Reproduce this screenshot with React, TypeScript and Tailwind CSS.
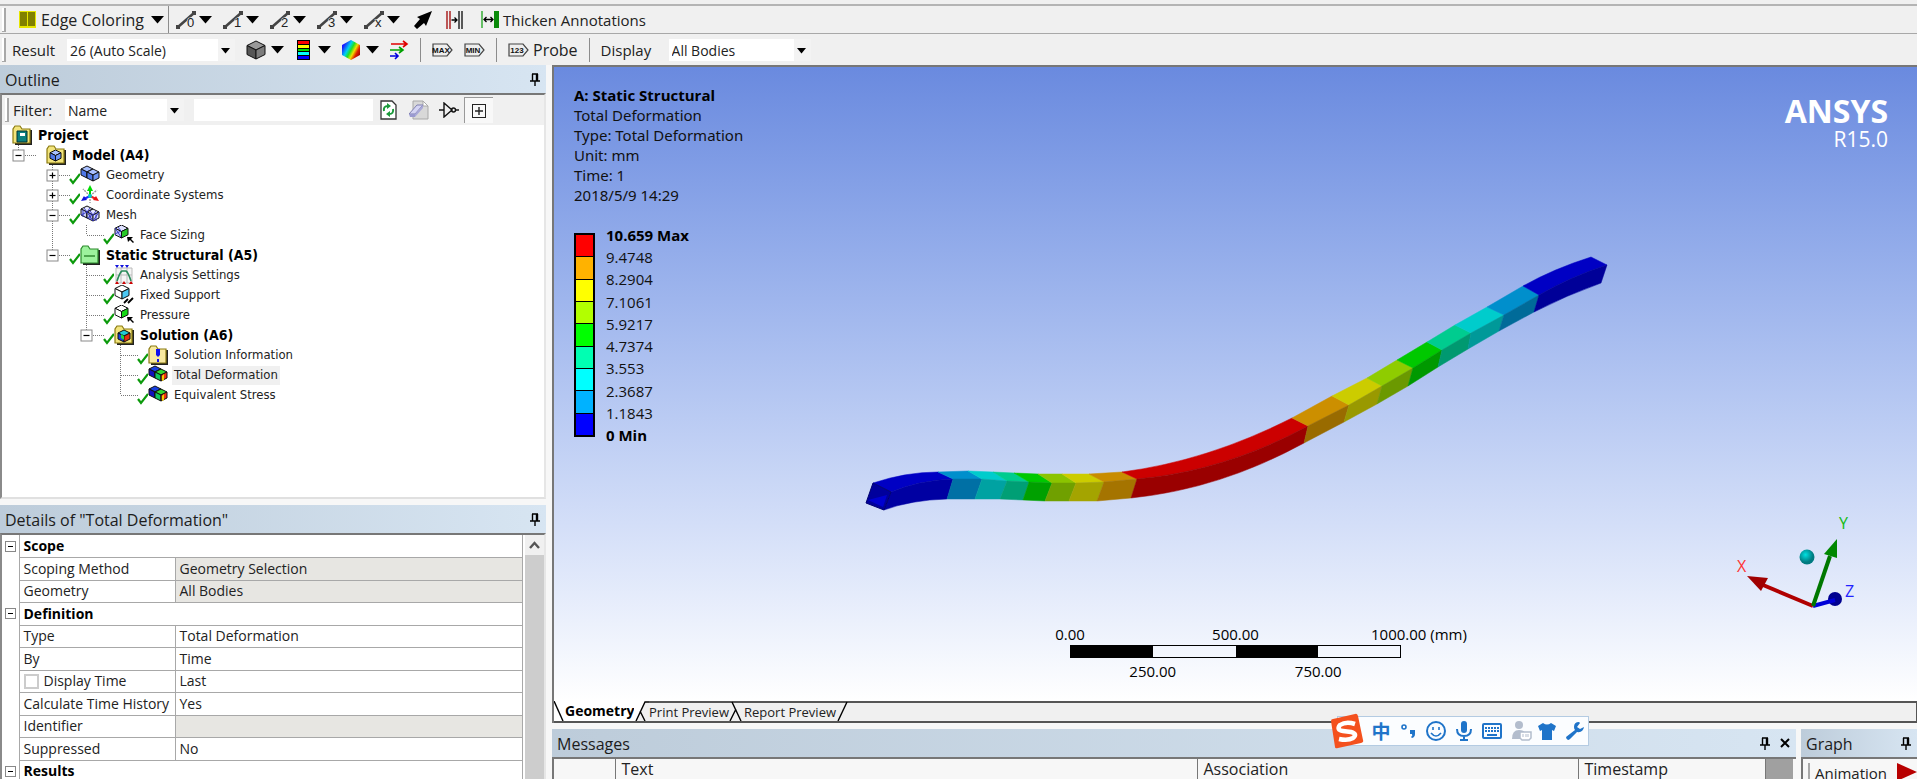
import type { ReactNode } from "react";
import clsx from "clsx";

const UI = "font-['Open_Sans','Noto_Sans',sans-serif]";

/* ---------- small shared pieces ---------- */

function Caret() {
  return (
    <svg width="13" height="8" viewBox="0 0 13 8" className="shrink-0">
      <path d="M0 0H13L6.5 7.5Z" fill="#000" />
    </svg>
  );
}

function Pin() {
  return (
    <svg width="10" height="13" viewBox="0 0 10 13" className="shrink-0">
      <path
        d="M2 1H8M2.5 1V8M0 8H10M5 8V13"
        stroke="#000"
        strokeWidth="1.4"
        fill="none"
      />
      <path d="M7 1V8" stroke="#000" strokeWidth="2.4" />
    </svg>
  );
}

function Grip() {
  return (
    <div className="h-6 w-1 shrink-0 border-r-2 border-b border-[#a8a8a8] bg-white" />
  );
}

function Separator() {
  return <div className="h-6 w-px shrink-0 bg-[#8c8c8c]" />;
}

interface PickerProps {
  id: string;
  value: string;
  className?: string;
}

function Picker({ id, value, className }: PickerProps) {
  return (
    <div className={clsx("flex h-[22px] items-center bg-[#f3f3f3]", className)}>
      <select
        id={id}
        defaultValue={value}
        className="h-full min-w-0 flex-1 appearance-none bg-white pt-[2px] pl-[3px] text-sm leading-5 text-[#222] outline-none"
      >
        <option>{value}</option>
      </select>
      <svg width="17" height="22" viewBox="0 0 17 22" className="shrink-0">
        <path d="M3 9H12L7.5 14.5Z" fill="#000" />
      </svg>
    </div>
  );
}

interface CubeProps {
  x?: number;
  y?: number;
  s?: number;
  top: string;
  left: string;
  right: string;
}

// Isometric cube, s is the full height
function Cube({ x = 0, y = 0, s = 18, top, left, right }: CubeProps) {
  const h = s / 2;
  const q = s / 4;
  const w = s;
  return (
    <g transform={`translate(${x} ${y})`} stroke="#111" strokeWidth="1" strokeLinejoin="round">
      <polygon points={`0,${q} ${w / 2},0 ${w},${q} ${w / 2},${h}`} fill={top} />
      <polygon points={`0,${q} ${w / 2},${h} ${w / 2},${s} 0,${s - q}`} fill={left} />
      <polygon points={`${w},${q} ${w / 2},${h} ${w / 2},${s} ${w},${s - q}`} fill={right} />
    </g>
  );
}

function Folder({ fill = "#f2e47c", edge = "#8a7a10" }: { fill?: string; edge?: string }) {
  return (
    <g>
      <path d="M3 19H19V5" stroke="#222" strokeWidth="2" fill="none" />
      <path d="M1 18V4L3 1H8L10 4H18V18Z" fill={fill} stroke={edge} strokeWidth="1.2" />
    </g>
  );
}

function PanelHeader({ title, closable = false }: { title: string; closable?: boolean }) {
  return (
    <header className="flex h-7 shrink-0 items-center gap-[10px] bg-linear-to-r from-[#bdccda] to-[#d7e5f2] pr-[6px] pl-[5px]">
      <h2 className="flex-1 truncate pt-px text-base leading-6 text-[#1c1c1c]">{title}</h2>
      <button aria-label={`Pin ${title}`}>
        <Pin />
      </button>
      {closable && (
        <button aria-label={`Close ${title}`}>
          <svg width="10" height="10" viewBox="0 0 10 10">
            <path d="M1 1L9 9M9 1L1 9" stroke="#000" strokeWidth="2" />
          </svg>
        </button>
      )}
    </header>
  );
}

/* ---------- toolbars ---------- */

const edgeModes = ["0", "1", "2", "3", "x"];

function EdgeToolbar() {
  return (
    <div className="flex h-[30px] items-center border-t-2 border-b border-t-[#b4b4b4] border-b-[#a8a8a8] pl-[2px]">
      <Grip />
      <button className="ml-2 flex h-full w-[155px] items-center gap-[5px] border-r border-[#8c8c8c] pl-[5px] text-left text-[#222]">
        <svg width="17" height="17" viewBox="0 0 17 17" className="shrink-0">
          <rect width="17" height="17" fill="#e6e600" />
          <rect x="1" y="1" width="7" height="14" fill="#808000" />
          <rect x="9" y="1" width="7" height="14" fill="#808000" />
        </svg>
        <span className="flex-1 text-base leading-5 whitespace-nowrap">Edge Coloring</span>
        <span className="pr-1">
          <Caret />
        </span>
      </button>
      <div className="ml-[7px] flex">
        {edgeModes.map((mode) => (
          <button
            key={mode}
            aria-label={`Edge option ${mode}`}
            className="flex w-[47px] items-center gap-[2px]"
          >
            <svg width="21" height="22" viewBox="0 0 21 22">
              <path d="M2 18L18 4" stroke="#444" strokeWidth="2.6" />
              <path d="M16 2h4v4h-4zM0 16h4v4h-4z" fill="#444" />
              <text
                x="11"
                y="18"
                fontSize="13"
                fill="#222"
                stroke="#f0f0f0"
                strokeWidth="1"
                paintOrder="stroke"
                fontFamily="Liberation Sans"
              >
                {mode}
              </text>
            </svg>
            <Caret />
          </button>
        ))}
      </div>
      <button aria-label="Edge direction" className="ml-[2px]">
        <svg width="20" height="20" viewBox="0 0 20 20">
          <path d="M19 1L4 7L7 9L1 16L4 19L11 13L13 16Z" fill="#000" />
        </svg>
      </button>
      <button aria-label="Split edges" className="ml-[13px]">
        <svg width="17" height="18" viewBox="0 0 17 18">
          <path d="M1 0V18M4 0V18" stroke="#b03030" strokeWidth="1.6" />
          <path d="M13 0V18M16 0V18" stroke="#333" strokeWidth="1.6" />
          <path d="M5.500 9H11M8.500 6.500L11 9L8.500 11.500" stroke="#000" strokeWidth="1.3" fill="none" />
        </svg>
      </button>
      <button className="ml-[18px] flex items-center gap-1 text-[#222]">
        <svg width="18" height="17" viewBox="0 0 18 17">
          <path d="M1 0V17" stroke="#2aa82a" strokeWidth="1.4" />
          <path d="M13 0h5v17h-5z" fill="#0a8a0a" />
          <path d="M3 8.500H12M5.500 6L3 8.500L5.500 11M9.500 6L12 8.500L9.500 11" stroke="#000" strokeWidth="1.3" fill="none" />
        </svg>
        <span className="text-[15px] leading-5 whitespace-nowrap">Thicken Annotations</span>
      </button>
    </div>
  );
}

function TagIcon({ label }: { label: string }) {
  return (
    <svg width="21" height="14" viewBox="0 0 21 14">
      <path d="M1 1H15L20 7L15 13H1Z" fill="#eee" stroke="#444" strokeWidth="1.2" />
      <text
        x="9"
        y="10"
        fontSize="8"
        fontWeight="bold"
        textAnchor="middle"
        fill="#111"
        fontFamily="Liberation Sans"
      >
        {label}
      </text>
    </svg>
  );
}

function ResultToolbar() {
  return (
    <div className="flex h-[31px] items-center pl-[2px]">
      <Grip />
      <label htmlFor="result-scale" className="ml-[6px] w-[55px] text-[15px] leading-5 text-[#222]">
        Result
      </label>
      <Picker id="result-scale" value="26 (Auto Scale)" className="w-[168px]" />
      <button aria-label="Geometry view" className="ml-[11px] flex items-center gap-[5px]">
        <svg width="20" height="20" viewBox="-1 -1 20 20">
          <Cube top="#999" left="#555" right="#7c7c7c" />
        </svg>
        <Caret />
      </button>
      <button aria-label="Contours" className="ml-[13px] flex items-center gap-2">
        <svg width="13" height="20" viewBox="0 0 13 20">
          <rect width="13" height="20" fill="#000" />
          <path d="M1 1h11v3h-11z" fill="#f00" />
          <path d="M1 5h11v3h-11z" fill="#ff0" />
          <path d="M1 9h11v2h-11z" fill="#0d0" />
          <path d="M1 12h11v3h-11z" fill="#0ff" />
          <path d="M1 16h11v3h-11z" fill="#00f" />
        </svg>
        <Caret />
      </button>
      <button aria-label="Edges" className="ml-[10px] flex items-center gap-[5px]">
        <svg width="20" height="20" viewBox="0 0 20 20">
          <defs>
            <linearGradient id="rainbow" x1="0" y1="0.2" x2="1" y2="0.8">
              <stop offset="0.1" stopColor="#1a1aff" />
              <stop offset="0.35" stopColor="#00d0f0" />
              <stop offset="0.5" stopColor="#20e020" />
              <stop offset="0.65" stopColor="#f0e000" />
              <stop offset="0.8" stopColor="#e02000" />
              <stop offset="1" stopColor="#900000" />
            </linearGradient>
          </defs>
          <path d="M1 5L10 0L19 5V15L10 20L1 15Z" fill="url(#rainbow)" />
        </svg>
        <Caret />
      </button>
      <button aria-label="Vector display" className="ml-[10px]">
        <svg width="20" height="20" viewBox="0 0 20 20" fill="none" strokeWidth="1.6">
          <path d="M2 4H18M14 1L18 4L14 7" stroke="#e00000" />
          <path d="M1 10H14M10 7L14 10L10 13" stroke="#00a000" />
          <path d="M1 16H9M6 13L9 16L6 19" stroke="#0000e0" />
        </svg>
      </button>
      <div className="ml-[11px] flex items-center gap-[11px]">
        <Separator />
        <button aria-label="Maximum">
          <TagIcon label="MAX" />
        </button>
        <button aria-label="Minimum">
          <TagIcon label="MIN" />
        </button>
        <Separator />
        <button className="flex items-center gap-1 text-base leading-5 text-[#222]">
          <TagIcon label="123" />
          Probe
        </button>
        <Separator />
        <label htmlFor="display-bodies" className="w-[57px] text-[15px] leading-5 text-[#222]">
          Display
        </label>
        <Picker id="display-bodies" value="All Bodies" className="w-[142px]" />
      </div>
    </div>
  );
}

/* ---------- outline ---------- */

type IconName =
  | "project"
  | "model"
  | "geometry"
  | "coords"
  | "mesh"
  | "sizing"
  | "static"
  | "analysis"
  | "fixed"
  | "pressure"
  | "solution"
  | "info"
  | "result";

const glyphs: Record<IconName, ReactNode> = {
  project: (
    <>
      <Folder />
      <path d="M5 6h10v11h-10z" fill="#0a8080" stroke="#033" />
      <path d="M8 8h5v3h-5z" fill="#fff" />
    </>
  ),
  model: (
    <>
      <Folder />
      <Cube x={4} y={5} s={11} top="#a8c0ff" left="#4f78e8" right="#6f96f4" />
    </>
  ),
  geometry: (
    <>
      <Cube x={1} y={1} s={12} top="#a8c0ff" left="#4f78e8" right="#6f96f4" />
      <Cube x={7} y={4} s={12} top="#a8c0ff" left="#4f78e8" right="#6f96f4" />
    </>
  ),
  coords: (
    <>
      <path d="M10 11L3 4M10 11L17 5M10 11V18" stroke="#999" strokeWidth="1.4" strokeDasharray="2 1" />
      <path d="M10 11V4" stroke="#0c0" strokeWidth="2" />
      <path d="M10 0L13 6H7Z" fill="#0d0" />
      <path d="M10 11L4 14" stroke="#22f" strokeWidth="2" />
      <path d="M1 16L4 11L7 15Z" fill="#11d" />
      <path d="M10 11L16 14" stroke="#e22" strokeWidth="2" />
      <path d="M19 16L13 15L16 11Z" fill="#e11" />
      <circle cx="10" cy="11" r="2" fill="#0cc" />
    </>
  ),
  mesh: (
    <>
      <Cube x={1} y={1} s={12} top="#e4e6ff" left="#c9cdf8" right="#d8dbff" />
      <Cube x={7} y={4} s={12} top="#e4e6ff" left="#c9cdf8" right="#d8dbff" />
      <path
        d="M1 10L7 7L4 3M7 7L10 3M7 13L13 10L10 6M13 10L16 6M7 7L13 16M13 16L19 7M3 5V12M10 8V15M16 9V16"
        stroke="#2d2fc0"
        strokeWidth="0.9"
        fill="none"
      />
    </>
  ),
  sizing: (
    <>
      <Cube x={1} y={0} s={13} top="#dfe2ff" left="#c9cdf8" right="#28c828" />
      <path d="M1 9L7 6L4 2M1 3L7 12" stroke="#2d2fc0" strokeWidth="0.9" fill="none" />
      <path d="M13 12H19L17 14L20 17L19 18L16 15L14 17Z" fill="#000" />
    </>
  ),
  static: (
    <>
      <Folder fill="#9df29d" edge="#2a8a2a" />
      <path d="M4 11H15" stroke="#187018" strokeWidth="1.2" />
    </>
  ),
  analysis: (
    <>
      <path d="M2 3h16v15h-16zM7 3V18M13 3V18M2 10H18" fill="#f5f5f5" stroke="#bbb" />
      <path d="M3 16Q6 7 8 6H12Q14 7 17 16" stroke="#2a8a5a" strokeWidth="1.6" fill="none" />
      <path d="M1 0h4l-2 3zM6 0h4l-2 3zM11 0h4l-2 3z" fill="#11d" />
      <path d="M1 19h4l-2-3zM8 19h4l-2-3zM15 19h4l-2-3z" fill="#c00" />
    </>
  ),
  fixed: (
    <>
      <Cube x={1} y={0} s={14} top="#fff" left="#fff" right="#4cc8f4" />
      <path d="M10 18L14 14M14 18L18 14M17 15L19 13" stroke="#000" strokeWidth="1.8" />
    </>
  ),
  pressure: (
    <>
      <Cube x={1} y={0} s={13} top="#fff" left="#fff" right="#14d814" />
      <path d="M13 12H19L17 14L20 17L19 18L16 15L14 17Z" fill="#000" />
    </>
  ),
  solution: (
    <>
      <Folder />
      <Cube x={4} y={5} s={12} top="#22c8d8" left="#1840e0" right="#e03010" />
      <path d="M7 9L10 11V15L7 13Z" fill="#20d840" />
    </>
  ),
  info: (
    <>
      <Folder fill="#f8e9a0" />
      <path d="M8 4h4v6l-2 2l-2-2z" fill="#11e" />
      <path d="M9 14h2v3h-2z" fill="#11e" />
    </>
  ),
  result: (
    <>
      <Cube x={1} y={1} s={12} top="#1840e0" left="#1010c0" right="#10b0e0" />
      <Cube x={7} y={4} s={12} top="#30d830" left="#10c860" right="#f03010" />
      <path d="M14 11L16 9V15L14 16Z" fill="#f0d000" />
    </>
  ),
};

interface TreeNode {
  label: string;
  icon: IconName;
  level: number;
  bold?: boolean;
  box?: "+" | "-";
  check?: boolean;
  // one flag per ancestor column: does its guide line run through this row
  guides?: boolean[];
  last?: boolean;
  selected?: boolean;
}

const tree: TreeNode[] = [
  { label: "Project", icon: "project", level: 0, bold: true },
  { label: "Model (A4)", icon: "model", level: 1, bold: true, box: "-", last: true },
  { label: "Geometry", icon: "geometry", level: 2, box: "+", check: true, guides: [false] },
  { label: "Coordinate Systems", icon: "coords", level: 2, box: "+", check: true, guides: [false] },
  { label: "Mesh", icon: "mesh", level: 2, box: "-", check: true, guides: [false] },
  { label: "Face Sizing", icon: "sizing", level: 3, check: true, guides: [false, true], last: true },
  { label: "Static Structural (A5)", icon: "static", level: 2, bold: true, box: "-", check: true, guides: [false], last: true },
  { label: "Analysis Settings", icon: "analysis", level: 3, check: true, guides: [false, false] },
  { label: "Fixed Support", icon: "fixed", level: 3, check: true, guides: [false, false] },
  { label: "Pressure", icon: "pressure", level: 3, check: true, guides: [false, false] },
  { label: "Solution (A6)", icon: "solution", level: 3, bold: true, box: "-", check: true, guides: [false, false], last: true },
  { label: "Solution Information", icon: "info", level: 4, check: true, guides: [false, false, false] },
  { label: "Total Deformation", icon: "result", level: 4, check: true, guides: [false, false, false], selected: true },
  { label: "Equivalent Stress", icon: "result", level: 4, check: true, guides: [false, false, false], last: true },
];

function Branch({ node }: { node: TreeNode }) {
  return (
    <svg width="34" height="20" viewBox="0 0 34 20" className="shrink-0">
      <g stroke="#777" strokeDasharray="1 1" fill="none">
        <path d={node.last ? "M6.500 0V10" : "M6.500 0V20"} />
        <path d="M7 10.500H25" />
      </g>
      {node.box && (
        <g>
          <rect x="1" y="5" width="11" height="11" fill="#fff" stroke="#8a8a8a" />
          <path d="M3.500 10.500H9.500" stroke="#000" strokeWidth="1.2" />
          {node.box === "+" && <path d="M6.500 7.500V13.500" stroke="#000" strokeWidth="1.2" />}
        </g>
      )}
      {node.check && (
        <path d="M24 14L27 18L34 9" stroke="#0c9a0c" strokeWidth="2.2" fill="none" />
      )}
    </svg>
  );
}

function OutlineTree() {
  return (
    <ul className="flex-1 overflow-hidden bg-white pl-[10px] font-['DejaVu_Sans_Condensed','DejaVu_Sans',sans-serif] leading-4 text-[#222]">
      {tree.map((node) => (
        <li key={node.label} className="flex h-5 items-center">
          {node.guides?.map((line, i) => (
            <svg key={i} width="34" height="20" viewBox="0 0 34 20" className="shrink-0">
              {line && <path d="M6.500 0V20" stroke="#777" strokeDasharray="1 1" />}
            </svg>
          ))}
          {node.level > 0 && <Branch node={node} />}
          <svg width="20" height="20" viewBox="0 0 20 20" className="shrink-0">
            {glyphs[node.icon]}
          </svg>
          <button
            className={clsx(
              "ml-1 h-[19px] px-[2px] whitespace-nowrap",
              node.bold ? "text-[14px] font-bold text-black" : "text-[13px]",
              node.selected && "bg-[#f0f0f0]"
            )}
          >
            {node.label}
          </button>
        </li>
      ))}
    </ul>
  );
}

function OutlinePanel() {
  return (
    <section className="flex h-[434px] shrink-0 flex-col">
      <PanelHeader title="Outline" />
      <div className="flex min-h-0 flex-1 flex-col border-2 border-t-[#777] border-r-[#e6e6e6] border-b-[#e0e0e0] border-l-[#8a8a8a]">
        <div className="flex h-[30px] shrink-0 items-center bg-[#f0f0f0] pl-[3px]">
          <Grip />
          <label htmlFor="filter-by" className="ml-1 w-[52px] text-[15px] leading-5 text-[#222]">
            Filter:
          </label>
          <Picker id="filter-by" value="Name" className="w-[119px]" />
          <input aria-label="Filter text" className="ml-[10px] h-[22px] w-[179px] bg-white px-1 text-sm" />
          <button aria-label="Refresh" className="ml-[7px]">
            <svg width="17" height="20" viewBox="0 0 17 20">
              <path d="M1 1H12L16 5V19H1Z" fill="#fff" stroke="#333" strokeWidth="1.3" />
              <path d="M4 11Q3 6 8 6M13 9Q14 14 9 14" stroke="#1a9a3a" strokeWidth="2" fill="none" />
              <path d="M7 3L11 6L7 9ZM10 11L6 14L10 17Z" fill="#1a9a3a" />
            </svg>
          </button>
          <button aria-label="Clear" className="ml-3">
            <svg width="20" height="20" viewBox="0 0 20 20">
              <path d="M4 1H14L19 6V19H4Z" fill="#d8d8d8" stroke="#a8a8a8" />
              <path d="M14 1V6H19Z" fill="#fff" stroke="#a8a8a8" />
              <path d="M0 14L8 5H14L6 14Z" fill="#d4d4f4" stroke="#8080b0" />
              <path d="M0 14H6V17H1Z" fill="#9a9ad0" />
              <path d="M6 17L14 8V5L6 14Z" fill="#a8a8d8" />
            </svg>
          </button>
          <button aria-label="Invert" className="ml-[10px]">
            <svg width="20" height="16" viewBox="0 0 20 16" fill="none" stroke="#111" strokeWidth="1.4">
              <path d="M0 8H5M5 1V15L13 8Z" />
              <circle cx="14.500" cy="8" r="2" />
              <path d="M17 8H20" />
            </svg>
          </button>
          <button
            aria-label="Expand all"
            className="ml-[5px] flex h-[26px] w-[29px] items-center justify-center border-t border-l border-[#999] bg-[#f8f8f8]"
          >
            <svg width="14" height="14" viewBox="0 0 14 14" fill="none" stroke="#222">
              <rect x="0.500" y="0.500" width="13" height="13" />
              <path d="M3 7H11M7 3V11" strokeWidth="1.4" />
            </svg>
          </button>
        </div>
        <OutlineTree />
      </div>
    </section>
  );
}

/* ---------- details ---------- */

interface DetailRow {
  name: string;
  value?: string;
  group?: boolean;
  readOnly?: boolean;
  tickable?: boolean;
}

const details: DetailRow[] = [
  { name: "Scope", group: true },
  { name: "Scoping Method", value: "Geometry Selection", readOnly: true },
  { name: "Geometry", value: "All Bodies", readOnly: true },
  { name: "Definition", group: true },
  { name: "Type", value: "Total Deformation" },
  { name: "By", value: "Time" },
  { name: "Display Time", value: "Last", tickable: true },
  { name: "Calculate Time History", value: "Yes" },
  { name: "Identifier", value: "", readOnly: true },
  { name: "Suppressed", value: "No" },
  { name: "Results", group: true },
];

function DetailsPanel() {
  return (
    <section className="mt-[6px] flex min-h-0 flex-1 flex-col">
      <PanelHeader title={'Details of "Total Deformation"'} />
      <div className="flex min-h-0 flex-1 overflow-hidden border-2 border-b-0 border-t-[#777] border-r-[#e6e6e6] border-l-[#8a8a8a] bg-white">
        <table className="flex-1 table-fixed self-start border-collapse text-sm leading-5 text-[#222]">
          <colgroup>
            <col className="w-[17px]" />
            <col className="w-[156px]" />
            <col />
          </colgroup>
          <tbody>
            {details.map((row) => (
              <tr key={row.name} className="h-[22px] even:h-[23px]">
                <td className="border-r border-[#a8a8a8] p-0">
                  {row.group && (
                    <button aria-label={`Collapse ${row.name}`} className="mx-auto block">
                      <svg width="11" height="11" viewBox="0 0 11 11">
                        <rect x="0.500" y="0.500" width="10" height="10" fill="#fff" stroke="#888" />
                        <path d="M3 5.500H8" stroke="#000" />
                      </svg>
                    </button>
                  )}
                </td>
                {row.group ? (
                  <th colSpan={2} className="border border-t-0 border-[#a8a8a8] p-0 pl-1 text-left font-bold text-black">
                    {row.name}
                  </th>
                ) : (
                  <>
                    <td className="border border-[#a8a8a8] p-0 pl-1 whitespace-nowrap">
                      {row.tickable ? (
                        <label className="flex items-center gap-[5px]">
                          <input
                            type="checkbox"
                            className="size-[15px] appearance-none border-2 border-[#ccc] bg-white"
                          />
                          {row.name}
                        </label>
                      ) : (
                        row.name
                      )}
                    </td>
                    <td
                      className={clsx(
                        "border border-[#a8a8a8] p-0 pl-1",
                        row.readOnly && "bg-[#e7e6e2]"
                      )}
                    >
                      {row.value}
                    </td>
                  </>
                )}
              </tr>
            ))}
          </tbody>
        </table>
        <div className="ml-[2px] flex w-[19px] shrink-0 flex-col bg-[#f0f0f0]">
          <button aria-label="Scroll up" className="flex h-5 items-center justify-center">
            <svg width="11" height="8" viewBox="0 0 11 8">
              <path d="M1 7L5.500 2L10 7" stroke="#555" strokeWidth="2.4" fill="none" />
            </svg>
          </button>
          <div className="flex-1 bg-[#cdcdcd]" />
        </div>
      </div>
    </section>
  );
}

/* ---------- graphics window ---------- */

const info = [
  "Total Deformation",
  "Type: Total Deformation",
  "Unit: mm",
  "Time: 1",
  "2018/5/9 14:29",
];

const legendColors = [
  "bg-[#ff0000]",
  "bg-[#ffb200]",
  "bg-[#ffff00]",
  "bg-[#b2ff00]",
  "bg-[#00ff00]",
  "bg-[#00ffb2]",
  "bg-[#00ffff]",
  "bg-[#00b2ff]",
  "bg-[#0000ff]",
];

const legendLabels = [
  "10.659 Max",
  "9.4748",
  "8.2904",
  "7.1061",
  "5.9217",
  "4.7374",
  "3.553",
  "2.3687",
  "1.1843",
  "0 Min",
];

// Cross sections along the beam: back edge, ridge, lower edge
const sections = [
  ["22 243", "40 252", "33 270"],
  ["87 232", "102 239", "96 259"],
  ["117 231", "131 239", "124 259"],
  ["142 232", "156 241", "149 259"],
  ["163 233", "178 242", "172 260"],
  ["187 234", "201 243", "194 261"],
  ["211 234", "225 243", "218 261"],
  ["238 234", "253 242", "246 261"],
  ["271 232", "286 239", "280 258"],
  ["441 178", "457 186", "453 203"],
  ["481 156", "498 165", "493 182"],
  ["516 138", "531 146", "526 164"],
  ["546 120", "562 128", "557 146"],
  ["576 102", "591 110", "587 127"],
  ["604 85", "620 93", "617 109"],
  ["636 67", "653 75", "648 91"],
  ["672 46", "688 55", "683 72"],
  ["740 17", "756 25", "750 43"],
];

const bends: Record<number, string[]> = {
  0: ["55 232", "69 240", "60 260"],
  8: ["356 221", "374 231", "369 249"],
  16: ["702 29", "721 36", "716 55"],
};

const bands = [
  ["#0000c4", "#0000a2"],
  ["#008fcc", "#0070a5"],
  ["#00cccc", "#00a2a2"],
  ["#00cc8f", "#009f75"],
  ["#00c800", "#00a000"],
  ["#8bc400", "#70a000"],
  ["#cccc00", "#a4a400"],
  ["#c88c00", "#a57400"],
  ["#cc0000", "#9a0000"],
  ["#cc8f00", "#996b00"],
  ["#cccc00", "#999900"],
  ["#8fcc00", "#6b9900"],
  ["#00c800", "#009900"],
  ["#00cc8f", "#009970"],
  ["#00cccc", "#009999"],
  ["#008fcc", "#006b99"],
  ["#0000c4", "#000098"],
];

function Beam() {
  return (
    <svg width="780" height="300" viewBox="-5 -6 780 300">
      {bands.map(([top, front], i) => {
        const a = sections[i];
        const b = sections[i + 1];
        const c = bends[i];
        const go = (k: number) => (c ? `Q${c[k]} ${b[k]}` : `L${b[k]}`);
        const back = (k: number) => (c ? `Q${c[k]} ${a[k]}` : `L${a[k]}`);
        return (
          <g key={i}>
            <path d={`M${a[0]}${go(0)}L${b[1]}${back(1)}Z`} fill={top} stroke={top} strokeWidth="0.5" />
            <path d={`M${a[1]}${go(1)}L${b[2]}${back(2)}Z`} fill={front} stroke={front} strokeWidth="0.5" />
          </g>
        );
      })}
      <path d="M22 243L40 252L33 270L15 263Z" fill="#00009c" stroke="#000070" />
      <path d="M17 260L36 255L32 267Z" fill="#0000d0" />
    </svg>
  );
}

function Ruler() {
  return (
    <div className="flex w-[331px] flex-col text-[15px] leading-5 text-black">
      <div className="-mx-[30px] flex justify-between">
        <span className="w-15 text-center">0.00</span>
        <span className="w-15 text-center">500.00</span>
        <span className="w-15 whitespace-nowrap">1000.00 (mm)</span>
      </div>
      <div className="mt-px flex h-[13px] border border-black">
        <div className="flex-1 bg-black" />
        <div className="flex-1" />
        <div className="flex-1 bg-black" />
        <div className="flex-1" />
      </div>
      <div className="mt-[3px] flex justify-around">
        <span>250.00</span>
        <span>750.00</span>
      </div>
    </div>
  );
}

function Triad() {
  return (
    <svg
      width="130"
      height="104"
      viewBox="0 0 130 104"
      className="absolute right-[57px] bottom-[87px] font-['Open_Sans',sans-serif]"
    >
      <defs>
        <radialGradient id="ball" cx="0.4" cy="0.35">
          <stop offset="0" stopColor="#00e0e0" />
          <stop offset="1" stopColor="#007a80" />
        </radialGradient>
      </defs>
      <circle cx="105" cy="89" r="7" fill="#000090" />
      <path d="M83 96L105 90" stroke="#0000d8" strokeWidth="4" />
      <path d="M83 96L33 75" stroke="#b00000" strokeWidth="4" />
      <path d="M17 66L38 68L31 81Z" fill="#a00000" />
      <path d="M83 96L100 46" stroke="#007800" strokeWidth="4" />
      <path d="M107 29L94 44L107 48Z" fill="#008800" />
      <circle cx="77" cy="47" r="7.500" fill="url(#ball)" />
      <text x="7" y="62" fontSize="16" fill="#f33">
        X
      </text>
      <text x="109" y="19" fontSize="16" fill="#1b1">
        Y
      </text>
      <text x="115" y="87" fontSize="16" fill="#22f">
        Z
      </text>
    </svg>
  );
}

function GraphicsWindow() {
  return (
    <div className="relative flex min-h-0 flex-1 flex-col bg-linear-to-b from-[#6a8adf] to-white">
      <div className="absolute inset-0 grid place-items-center overflow-hidden">
        <Beam />
      </div>
      <div className="relative flex justify-between pt-[18px] pr-[29px] pl-5">
        <div className="text-[15px] leading-5 text-[#111]">
          <h1 className="font-bold text-black">A: Static Structural</h1>
          {info.map((line) => (
            <p key={line} className="font-['Noto_Sans',sans-serif]">
              {line}
            </p>
          ))}
        </div>
        <div className="pt-2 text-right text-white">
          <p className="text-[32px] leading-9 font-bold">ANSYS</p>
          <p className="text-[21px] leading-5">R15.0</p>
        </div>
      </div>
      <div className="relative mt-5 flex h-[220px] items-center gap-[11px] pl-5">
        <div className="flex h-[204px] w-[21px] flex-col divide-y divide-black border-2 border-black">
          {legendColors.map((color) => (
            <div key={color} className={clsx("flex-1", color)} />
          ))}
        </div>
        <ul className="flex h-full flex-col justify-between text-[15px] leading-5 text-[#111]">
          {legendLabels.map((label) => (
            <li key={label} className="first:font-bold first:text-black last:font-bold last:text-black">
              {label}
            </li>
          ))}
        </ul>
      </div>
      <div className="relative mt-auto flex justify-center pb-5">
        <Ruler />
      </div>
      <Triad />
    </div>
  );
}

function ViewTabs() {
  return (
    <div className="flex h-[22px] shrink-0 border-b-2 border-[#555] bg-[#f0f0f0] text-[13px] leading-5 text-[#222]">
      <div className="flex bg-white">
        <svg width="11" height="20" viewBox="0 0 11 20">
          <path d="M0 0L9 20" stroke="#000" strokeWidth="1.4" />
        </svg>
        <button className="w-[69px] text-sm leading-5 font-bold text-black">Geometry</button>
      </div>
      <svg width="15" height="20" viewBox="0 0 15 20">
        <path d="M0 0H11L2 20H0Z" fill="#fff" />
        <path d="M2 20L11 1H15M6 10L11 20" stroke="#000" strokeWidth="1.4" fill="none" />
      </svg>
      <button className="w-[79px] border-t-2 border-[#555] leading-[18px] whitespace-nowrap">Print Preview</button>
      <svg width="16" height="20" viewBox="0 0 16 20">
        <path d="M0 1H16" stroke="#555" strokeWidth="2" />
        <path d="M2 20L8 8M4 1L13 20" stroke="#000" strokeWidth="1.4" fill="none" />
      </svg>
      <button className="w-[92px] border-t-2 border-[#555] leading-[18px] whitespace-nowrap">Report Preview</button>
      <svg width="14" height="20" viewBox="0 0 14 20">
        <path d="M0 1H14" stroke="#555" strokeWidth="2" />
        <path d="M2 20L11 1" stroke="#000" strokeWidth="1.4" />
      </svg>
      <div className="flex-1 border-t-2 border-r border-[#555]" />
    </div>
  );
}

/* ---------- bottom panels ---------- */

function MessagesPanel() {
  return (
    <section className="flex min-w-0 flex-1 flex-col">
      <PanelHeader title="Messages" closable />
      <div className="flex min-h-0 flex-1 border-t-2 border-l-2 border-[#777]">
        <table className="h-full min-w-0 flex-1 table-fixed border-collapse text-base leading-5 text-[#222]">
          <colgroup>
            <col className="w-[61px]" />
            <col className="w-[582px]" />
            <col className="w-[381px]" />
            <col />
          </colgroup>
          <thead>
            <tr className="text-left">
              <th aria-label="Severity" className="border-r border-[#777] p-0" />
              <th className="border-r border-[#777] p-0 pl-[6px] font-normal">Text</th>
              <th className="border-r border-[#777] p-0 pl-[6px] font-normal">Association</th>
              <th className="p-0 pl-[6px] font-normal">Timestamp</th>
            </tr>
          </thead>
        </table>
        <div className="w-7 shrink-0 border-l border-[#777] bg-[#a0a0a0]" />
        <div className="w-[3px] shrink-0" />
      </div>
    </section>
  );
}

function GraphPanel() {
  return (
    <section className="flex w-[116px] shrink-0 flex-col">
      <PanelHeader title="Graph" />
      <div className="flex min-h-0 flex-1 items-start overflow-hidden border-t-2 border-l-2 border-[#777] pt-1 pl-[5px]">
        <div className="h-5 w-[2px] bg-[#a8a8a8]" />
        <span className="ml-[5px] w-[83px] text-[15px] leading-5 text-[#222]">Animation</span>
        <button aria-label="Play">
          <svg width="20" height="18" viewBox="0 0 20 18">
            <path d="M0 0L20 9L0 18Z" fill="#b80000" />
          </svg>
        </button>
      </div>
    </section>
  );
}

/* ---------- floating input method bar ---------- */

function ImeBar() {
  return (
    <div className="absolute right-[328px] bottom-[33px] flex h-[30px] w-[252px] items-center border border-[#b4cbe2] bg-[#fbfdff] text-[#1f74c9]">
      <svg width="34" height="36" viewBox="0 0 34 36" className="-ml-[8px] shrink-0">
        <path d="M3 6Q1 6 1 8L5 34Q5 36 8 35L31 30Q34 29 33 27L28 3Q27 0 25 1Z" fill="#f4511e" />
        <path
          d="M25 11Q16 8 10 12Q6 17 13 18L21 19Q28 21 23 25Q18 28 9 26"
          stroke="#fff"
          strokeWidth="4.500"
          fill="none"
        />
      </svg>
      <button className="ml-[7px] w-5 font-['Noto_Sans_CJK_SC',sans-serif] text-[19px] leading-6 font-bold">
        中
      </button>
      <svg width="15" height="16" viewBox="0 0 15 16" className="ml-[10px] shrink-0">
        <circle cx="3" cy="4" r="2" fill="none" stroke="currentColor" strokeWidth="1.6" />
        <path d="M9 7h5v4q0 3-3 4l-1-1q2-1 1-3h-2z" fill="currentColor" />
      </svg>
      <svg width="20" height="20" viewBox="0 0 20 20" className="ml-[10px] shrink-0" fill="none" stroke="currentColor" strokeWidth="2">
        <circle cx="10" cy="10" r="9" />
        <path d="M7 6V9M13 6V9M5 12Q10 18 15 12" strokeWidth="1.6" />
      </svg>
      <svg width="16" height="20" viewBox="0 0 16 20" className="ml-[10px] shrink-0">
        <rect x="5" y="0" width="6" height="12" rx="3" fill="currentColor" />
        <path d="M1 8Q1 15 8 15Q15 15 15 8M8 15V19M4 19H12" stroke="currentColor" strokeWidth="2" fill="none" />
      </svg>
      <svg width="20" height="16" viewBox="0 0 20 16" className="ml-[10px] shrink-0">
        <rect x="1" y="1" width="18" height="14" rx="1" fill="none" stroke="currentColor" strokeWidth="2" />
        <path d="M3 5H17M3 8H17" stroke="currentColor" strokeWidth="2" strokeDasharray="2 1" />
        <path d="M5 12H15" stroke="currentColor" strokeWidth="2" />
      </svg>
      <svg width="20" height="20" viewBox="0 0 20 20" className="ml-[10px] shrink-0">
        <circle cx="7" cy="4" r="4" fill="#b3bdcd" />
        <path d="M0 18Q0 9 7 9Q12 9 13 12V18Z" fill="#b3bdcd" />
        <path d="M8 11H19V17L17 19H10L8 17Z" fill="#fff" stroke="#b3bdcd" strokeWidth="1.5" />
        <path d="M11 13V16M14 13V16M16 13V16" stroke="#b3bdcd" />
      </svg>
      <svg width="18" height="18" viewBox="0 0 18 18" className="ml-[6px] shrink-0">
        <path d="M5 1Q9 4 13 1L18 4L16 9L14 8V18H4V8L2 9L0 4Z" fill="currentColor" />
      </svg>
      <svg width="18" height="18" viewBox="0 0 18 18" className="ml-[10px] shrink-0">
        <path
          d="M13 0Q8 0 8 5Q8 7 9 8L0 15Q0 17 2 18Q3 18 4 17L11 10Q17 11 18 5L14 7L11 5L14 1Z"
          fill="currentColor"
        />
      </svg>
    </div>
  );
}

export default function App() {
  return (
    <div className={clsx("relative flex h-screen flex-col overflow-hidden bg-[#f0f0f0]", UI)}>
      <div className="h-1 shrink-0" />
      <EdgeToolbar />
      <ResultToolbar />
      <div className="flex min-h-0 flex-1 bg-[#f7f7f7]">
        <aside className="mr-[6px] flex w-[546px] shrink-0 flex-col">
          <OutlinePanel />
          <DetailsPanel />
        </aside>
        <main className="flex min-w-0 flex-1 flex-col">
          <div className="flex min-h-0 flex-1 flex-col border-t-2 border-l-2 border-[#777]">
            <GraphicsWindow />
            <ViewTabs />
          </div>
          <div className="mt-[6px] flex h-[50px] shrink-0 gap-[5px] overflow-hidden">
            <MessagesPanel />
            <GraphPanel />
          </div>
        </main>
      </div>
      <ImeBar />
    </div>
  );
}
